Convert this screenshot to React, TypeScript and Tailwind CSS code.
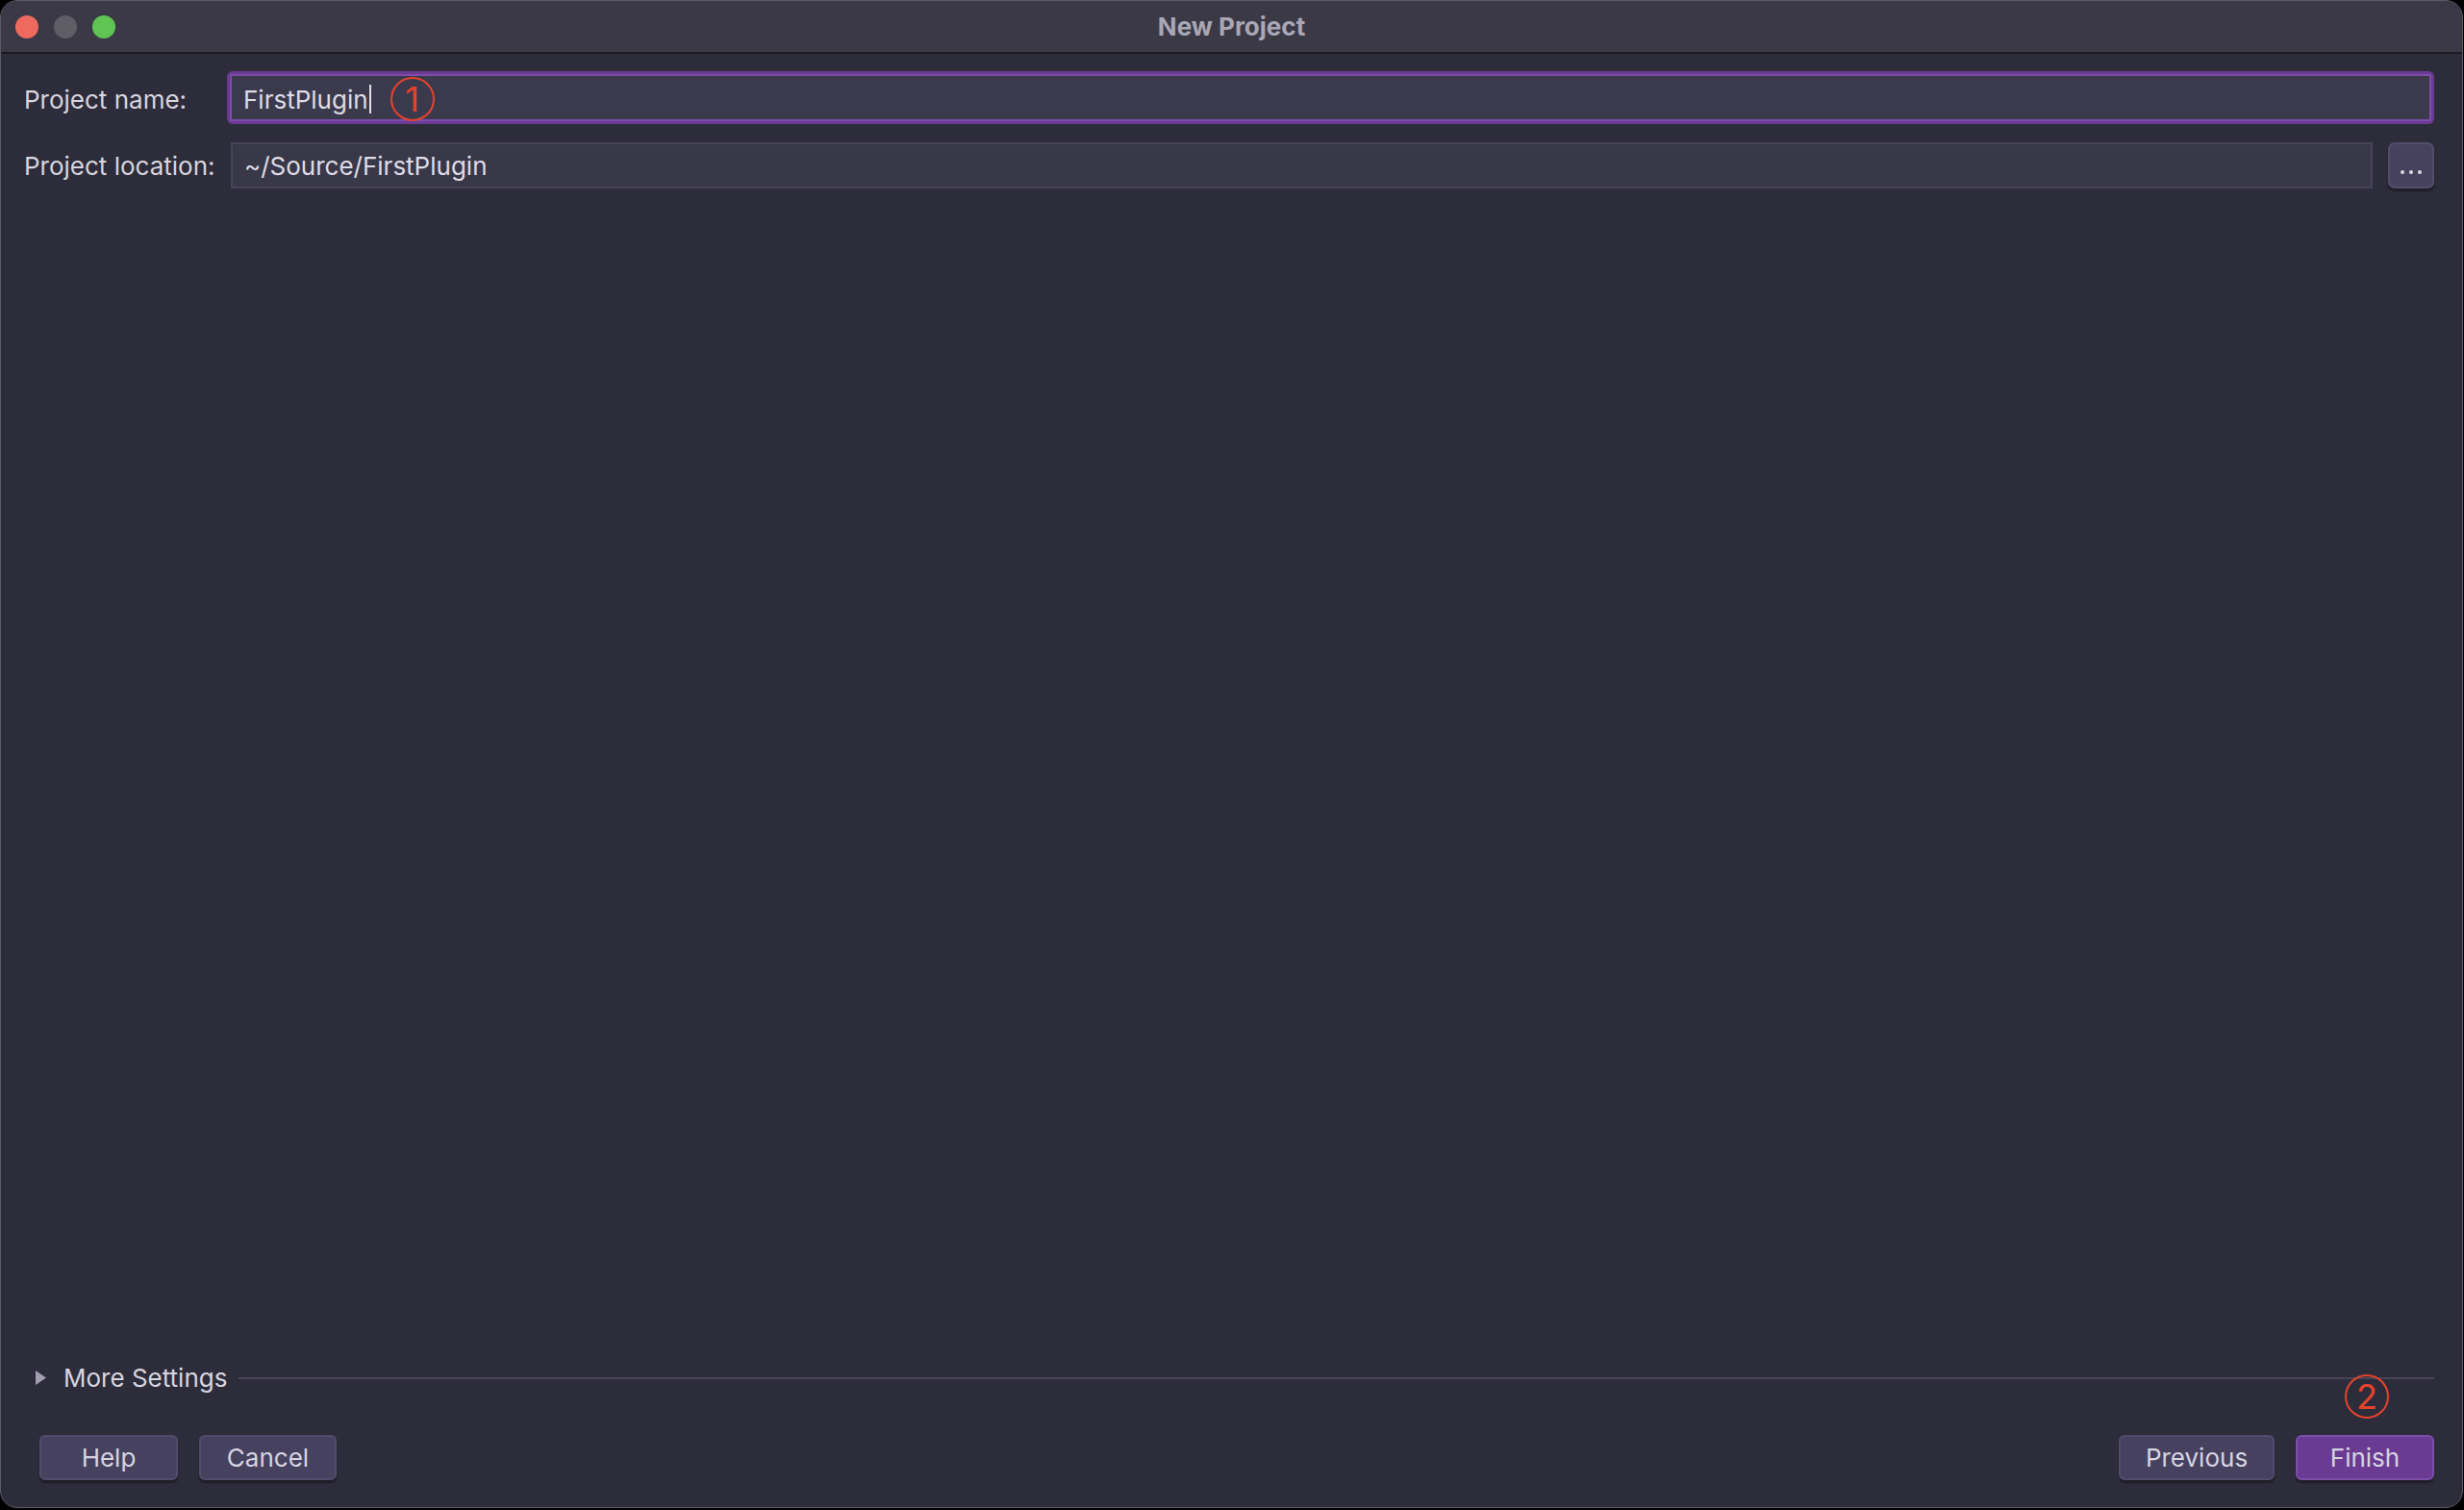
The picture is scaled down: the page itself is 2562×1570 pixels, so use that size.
import React from "react";

const font = { fontFamily: 'Inter, "Noto Sans", "Liberation Sans", sans-serif' };

function Circled({ n }: { n: string }) {
  return (
    <span className="flex h-[46px] w-[46px] items-center justify-center rounded-full border-2 border-[#e5432b] text-[36px] leading-none text-[#e5432b]">
      {n}
    </span>
  );
}

function Btn({ label, width, primary }: { label: string; width: string; primary?: boolean }) {
  return (
    <button
      className={`h-[47px] ${width} rounded-[6px] border-2 text-[26px] text-[#d6d4e0] shadow-[0_3px_2px_rgba(0,0,0,0.35)] ${
        primary ? "border-[#7d4fa8] bg-[#6b3a93]" : "border-[#514c6b] bg-[#46415f]"
      }`}
    >
      {label}
    </button>
  );
}

export default function App() {
  return (
    <div className="h-[1570px] w-[2562px] bg-black" style={font}>
      <div className="flex h-[1568px] w-[2561px] flex-col overflow-hidden rounded-[18px] border border-[#5d5c66] bg-[#2d2c3a]">
        {/* title bar */}
        <div className="relative flex h-[55px] shrink-0 items-center justify-center border-b-2 border-[#1c1b23] bg-[#3a3945]">
          <div className="absolute left-[15px] top-[15px] flex gap-[16px]">
            <span className="h-[24px] w-[24px] rounded-full bg-[#ee6a5f]" />
            <span className="h-[24px] w-[24px] rounded-full bg-[#5f5e66]" />
            <span className="h-[24px] w-[24px] rounded-full bg-[#5fc454]" />
          </div>
          <span className="text-[26px] font-bold text-[#a9a7b6]">New Project</span>
        </div>

        <div className="flex flex-1 flex-col pl-[24px] pr-[29px]">
          {/* form */}
          <div className="mt-[18px] flex flex-col gap-[19px]">
            <div className="flex items-center">
              <span className="w-[211px] pt-[3px] text-[26px] text-[#d7d5df]">Project name:</span>
              <div className="relative flex-1 rounded-[6px] bg-[#6b3b93] p-[3px]">
                <div className="flex h-[49px] items-center border-2 border-[#7e4cab] bg-[#3b3a4d] pl-[12px] pt-[3px]">
                  <span className="text-[26px] text-[#dedce6]">FirstPlugin</span>
                  <span className="ml-[1px] h-[30px] w-[2px] bg-[#dedce6]" />
                  <span className="ml-[20px]">
                    <Circled n="1" />
                  </span>
                </div>
              </div>
            </div>
            <div className="flex items-center">
              <span className="w-[215px] text-[26px] text-[#d7d5df]">Project location:</span>
              <div className="flex h-[48px] flex-1 items-center border-2 border-[#464456] bg-[#393849] pl-[12px]">
                <span className="text-[26px] text-[#dedce6]">~/Source/FirstPlugin</span>
              </div>
              <button className="ml-[16px] flex h-[48px] w-[48px] items-end justify-center gap-[5px] rounded-[7px] border-2 border-[#524e6b] bg-[#46425e] pb-[13px] shadow-[0_3px_2px_rgba(0,0,0,0.35)]">
                <span className="h-[4px] w-[4px] rounded-full bg-[#dcdae6]" />
                <span className="h-[4px] w-[4px] rounded-full bg-[#dcdae6]" />
                <span className="h-[4px] w-[4px] rounded-full bg-[#dcdae6]" />
              </button>
            </div>
          </div>

          <div className="flex-1" />

          {/* more settings */}
          <div className="flex items-center pl-[12px]">
            <svg width="11" height="15" viewBox="0 0 11 15" className="shrink-0">
              <path d="M0 0 L11 7.5 L0 15 Z" fill="#a09eb0" />
            </svg>
            <span className="ml-[18px] text-[26px] text-[#d7d5df]">More Settings</span>
            <div className="ml-[12px] h-[2px] flex-1 bg-[#474556]" />
          </div>

          {/* buttons */}
          <div className="relative mb-[28px] mt-[40px] flex items-center justify-between pl-[16px]">
            <div className="flex gap-[22px]">
              <Btn label="Help" width="w-[144px]" />
              <Btn label="Cancel" width="w-[143px]" />
            </div>
            <div className="flex gap-[22px]">
              <Btn label="Previous" width="w-[162px]" />
              <Btn label="Finish" width="w-[144px]" primary />
            </div>
            <div className="absolute right-[47px] top-[-63px]">
              <Circled n="2" />
            </div>
          </div>
        </div>
      </div>
    </div>
  );
}
